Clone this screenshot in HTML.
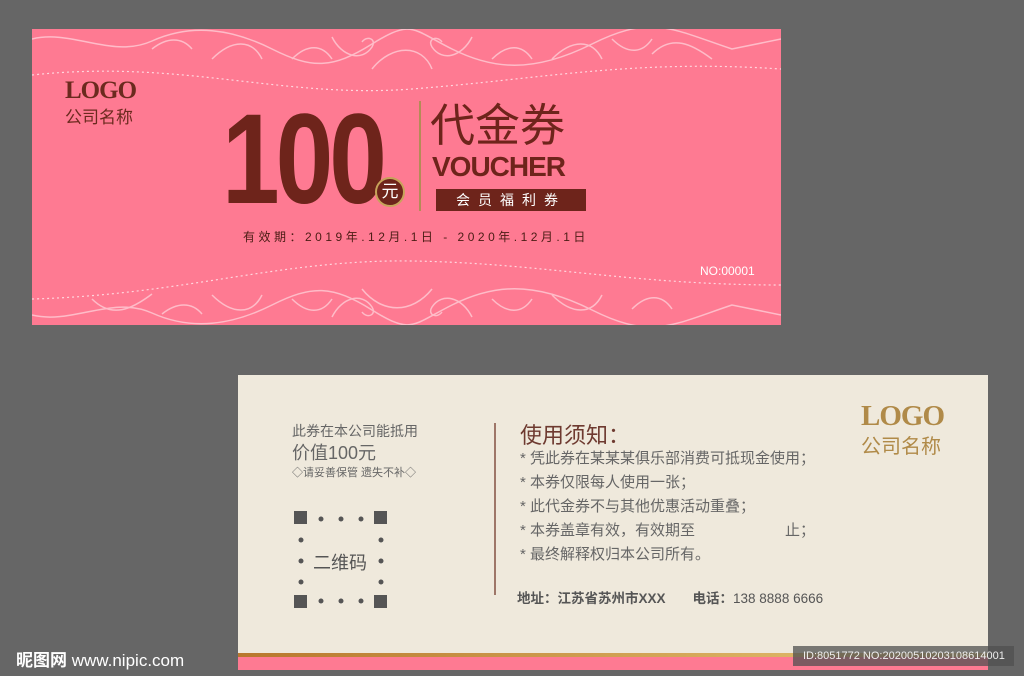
<!DOCTYPE html>
<html><head><meta charset="utf-8"><style>
*{margin:0;padding:0;box-sizing:border-box}
body{width:1024px;height:676px;background:#666;position:relative;overflow:hidden;font-family:"Liberation Sans","Noto Sans CJK SC",sans-serif}
.a{position:absolute;white-space:nowrap}
#top{left:32px;top:29px;width:749px;height:296px;background:#fe7a92;overflow:hidden}
#bot{left:238px;top:375px;width:750px;height:295px;background:#efe9dc;overflow:hidden}
</style></head><body>
<div id="top" class="a">
<svg class="a" style="left:0;top:0" width="749" height="296" viewBox="0 0 749 296">
<g fill="none" stroke="#ffc8d2" stroke-width="1.5" opacity="0.85">
<path d="M0 10 C40 0 80 30 120 12 S200 0 240 20 S300 40 340 15 S380 0 420 20 S500 45 560 15 S640 0 700 20 L749 10"/>
<path d="M300 8 c10 20 30 25 40 10 c5 -8 -5 -12 -10 -5 M440 8 c-10 20 -30 25 -40 10 c-5 -8 5 -12 10 -5"/>
<path d="M340 40 c20 -25 50 -25 60 0 M180 30 c20 -20 40 -20 50 0 M520 30 c20 -20 40 -20 50 0 M620 25 c20 -20 40 -10 60 5"/>
<path d="M260 30 c15 -15 30 -15 40 0 M460 30 c15 -15 30 -15 40 0 M580 10 c15 15 30 15 40 0 M120 20 c15 -12 30 -12 40 0"/>
<path d="M0 286 C40 296 80 266 120 284 S200 296 240 276 S300 256 340 281 S380 296 420 276 S500 251 560 281 S640 296 700 276 L749 286"/>
<path d="M300 288 c10 -20 30 -25 40 -10 c5 8 -5 12 -10 5 M440 288 c-10 -20 -30 -25 -40 -10 c-5 8 5 12 10 5"/>
<path d="M330 260 c20 25 50 25 70 0 M180 266 c20 20 40 20 50 0 M520 266 c20 20 40 20 50 0 M60 270 c20 20 40 10 60 -5"/>
<path d="M260 270 c15 15 30 15 40 0 M460 270 c15 15 30 15 40 0 M600 280 c15 -15 30 -15 40 0 M130 285 c15 -12 30 -12 40 0"/>
</g>
<path d="M0 46 C150 30 250 70 380 60 S600 30 749 40" fill="none" stroke="#ffd6de" stroke-width="1.2" stroke-dasharray="2 3"/>
<path d="M0 270 C150 266 250 230 380 232 S600 256 749 256" fill="none" stroke="#ffd6de" stroke-width="1.2" stroke-dasharray="2 3"/>
</svg>
<div class="a" style="left:33px;top:48px;font-family:'Liberation Serif',serif;font-weight:bold;font-size:25px;color:#6b2a1e;letter-spacing:-1px">LOGO</div>
<div class="a" style="left:33px;top:74px;font-size:17px;color:#6b2a1e">公司名称</div>
<div class="a" style="left:190px;top:67px;font-weight:bold;font-size:128px;color:#6e241b;letter-spacing:-5px;line-height:128px;transform:scaleX(0.81);transform-origin:left">100</div>
<div class="a" style="left:343px;top:148px;width:30px;height:30px;border-radius:50%;background:#6e241b;border:2px solid #c7a35a;color:#fff;font-size:17px;text-align:center;line-height:25px">元</div>
<div class="a" style="left:387px;top:72px;width:2px;height:110px;background:#b48b57"></div>
<div class="a" style="left:398px;top:72px;font-size:45px;color:#6e241b;line-height:50px">代金券</div>
<div class="a" style="left:400px;top:122px;font-weight:bold;font-size:28px;color:#6e241b;letter-spacing:-1px">VOUCHER</div>
<div class="a" style="left:404px;top:160px;width:150px;height:22px;background:#6e241b;color:#fff;font-size:14px;text-align:center;line-height:22px;letter-spacing:8px">会员福利券</div>
<div class="a" style="left:211px;top:199px;font-size:12px;color:#4a1c14;letter-spacing:3.5px">有效期：2019年.12月.1日 - 2020年.12月.1日</div>
<div class="a" style="left:668px;top:235px;font-size:12px;color:#fff">NO:00001</div>
</div>
<div id="bot" class="a">
<div class="a" style="left:54px;top:46px;font-size:14px;color:#666">此券在本公司能抵用</div>
<div class="a" style="left:54px;top:64px;font-size:18px;color:#666">价值100元</div>
<div class="a" style="left:54px;top:89px;font-size:11px;color:#666">◇请妥善保管 遗失不补◇</div>
<svg class="a" style="left:56px;top:136px" width="96" height="100" fill="#555">
<rect x="0" y="0" width="13" height="13"/><rect x="80" y="0" width="13" height="13"/><rect x="0" y="84" width="13" height="13"/><rect x="80" y="84" width="13" height="13"/>
<circle cx="27" cy="8" r="2.5"/><circle cx="47" cy="8" r="2.5"/><circle cx="67" cy="8" r="2.5"/>
<circle cx="27" cy="90" r="2.5"/><circle cx="47" cy="90" r="2.5"/><circle cx="67" cy="90" r="2.5"/>
<circle cx="7" cy="29" r="2.5"/><circle cx="7" cy="50" r="2.5"/><circle cx="7" cy="71" r="2.5"/>
<circle cx="87" cy="29" r="2.5"/><circle cx="87" cy="50" r="2.5"/><circle cx="87" cy="71" r="2.5"/>
</svg>
<div class="a" style="left:75px;top:174px;font-size:18px;color:#555">二维码</div>
<div class="a" style="left:256px;top:48px;width:2px;height:172px;background:#9e7668"></div>
<div class="a" style="left:282px;top:43px;font-size:22px;color:#6e3a30">使用须知：</div>
<div class="a" style="left:282px;top:72px;font-size:15px;color:#666;line-height:24px">
* 凭此券在某某某俱乐部消费可抵现金使用；<br>* 本券仅限每人使用一张；<br>* 此代金券不与其他优惠活动重叠；<br>* 本券盖章有效，有效期至　　　　　　止；<br>* 最终解释权归本公司所有。</div>
<div class="a" style="left:279px;top:212px;font-size:13.5px;color:#555"><b>地址：江苏省苏州市XXX</b>　　<b>电话：</b>138 8888 6666</div>
<div class="a" style="left:623px;top:25px;font-family:'Liberation Serif',serif;font-weight:bold;font-size:29px;color:#b08a48;letter-spacing:-1px">LOGO</div>
<div class="a" style="left:623px;top:55px;font-size:20px;color:#b08a48">公司名称</div>
<div class="a" style="left:0;top:278px;width:750px;height:4px;background:linear-gradient(90deg,#b8772d,#e8c878)"></div>
<div class="a" style="left:0;top:282px;width:750px;height:13px;background:#fe7a92"></div>
</div>
<div class="a" style="left:793px;top:646px;width:221px;height:20px;background:rgba(80,80,80,.75);color:#eee;font-size:11px;line-height:20px;padding-left:10px">ID:8051772 NO:20200510203108614001</div>
<div class="a" style="left:16px;top:646px;color:#fff;font-size:17px;font-weight:bold">昵图网 <span style="font-weight:normal">www.nipic.com</span></div>
</body></html>
